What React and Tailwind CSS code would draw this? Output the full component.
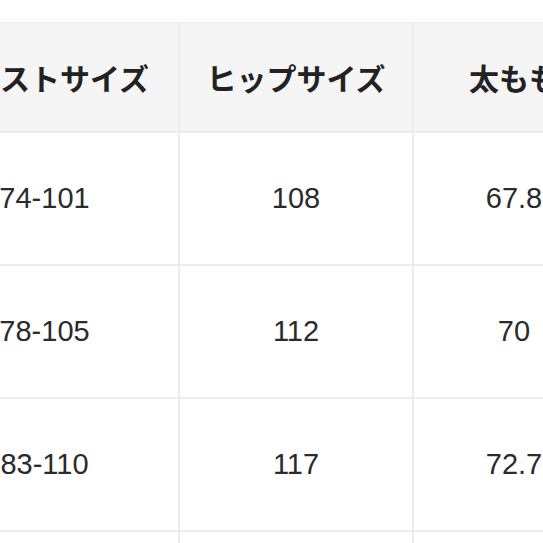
const headers = ["ウエストサイズ", "ヒップサイズ", "太もも", "股下"];

const rows = [
  ["74-101", "108", "67.8", "76"],
  ["78-105", "112", "70", "77"],
  ["83-110", "117", "72.7", "78"],
  ["88-115", "122", "75", "79"],
];

const colWidths = ["w-[269px]", "w-[234px]", "w-[202px]", "w-[200px]"];

export default function App() {
  return (
    <div className="w-[543px] h-[543px] overflow-hidden bg-white pt-[22px]">
      <div className="ml-[-89px] w-max">
        <div className="flex h-[111px] bg-[#f5f5f5] border-t border-[#ececec]">
          {headers.map((h, i) => (
            <div
              key={i}
              className={`${colWidths[i]} shrink-0 flex items-center justify-center border-r-2 border-b-2 border-[#ebebeb] text-[30px] font-bold text-[#222] whitespace-nowrap`}
              style={{ fontFamily: '"Noto Sans CJK JP", "Noto Sans", sans-serif' }}
            >
              {h}
            </div>
          ))}
        </div>
        {rows.map((row, r) => (
          <div key={r} className="flex h-[133px]">
            {row.map((cell, i) => (
              <div
                key={i}
                className={`${colWidths[i]} shrink-0 flex items-center justify-center border-r-2 border-b-2 border-[#ededed] text-[29px] text-[#2b2b2b] font-['Liberation_Sans',Arial,sans-serif]`}
              >
                {cell}
              </div>
            ))}
          </div>
        ))}
      </div>
    </div>
  );
}
